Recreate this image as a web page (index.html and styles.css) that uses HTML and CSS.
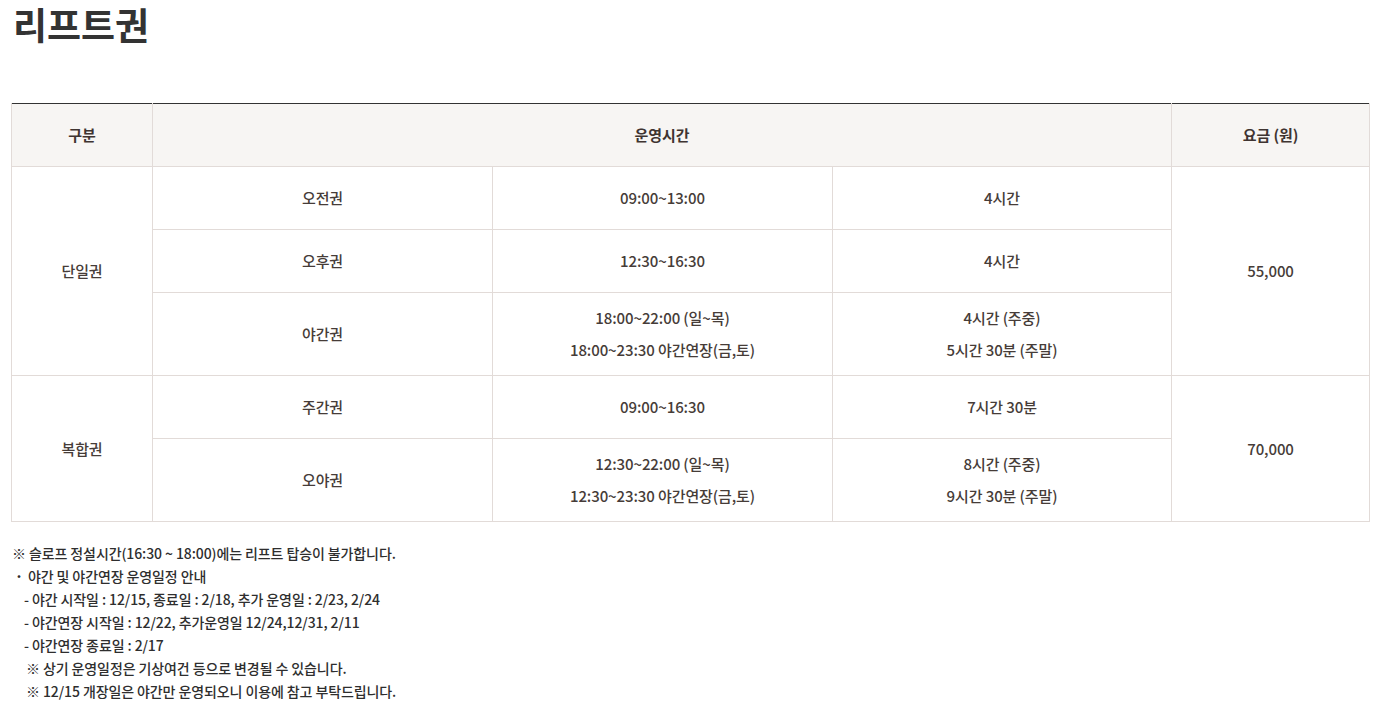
FILE: index.html
```html
<!DOCTYPE html>
<html lang="ko">
<head>
  <meta charset="UTF-8">
  <meta name="viewport" content="width=device-width, initial-scale=1.0">
  <title>리프트권</title>
  <link rel="stylesheet" href="styles.css">
</head>
<body>
  <h1 class="page-title">리프트권</h1>

  <!-- 리프트권 요금표 -->
  <table class="price-table">
    <colgroup>
      <col class="col-type">
      <col class="col-name">
      <col class="col-time">
      <col class="col-hours">
      <col class="col-price">
    </colgroup>
    <thead>
      <tr>
        <th>구분</th>
        <th colspan="3">운영시간</th>
        <th>요금 (원)</th>
      </tr>
    </thead>
    <tbody>
      <tr>
        <td rowspan="3">단일권</td>
        <td>오전권</td>
        <td>09:00~13:00</td>
        <td>4시간</td>
        <td rowspan="3">55,000</td>
      </tr>
      <tr>
        <td>오후권</td>
        <td>12:30~16:30</td>
        <td>4시간</td>
      </tr>
      <tr class="tall">
        <td>야간권</td>
        <td>18:00~22:00 (일~목)<br>18:00~23:30 야간연장(금,토)</td>
        <td>4시간 (주중)<br>5시간 30분 (주말)</td>
      </tr>
      <tr>
        <td rowspan="2">복합권</td>
        <td>주간권</td>
        <td>09:00~16:30</td>
        <td>7시간 30분</td>
        <td rowspan="2">70,000</td>
      </tr>
      <tr class="tall">
        <td>오야권</td>
        <td>12:30~22:00 (일~목)<br>12:30~23:30 야간연장(금,토)</td>
        <td>8시간 (주중)<br>9시간 30분 (주말)</td>
      </tr>
    </tbody>
  </table>

  <!-- 안내사항 -->
  <div class="notes">
    <p>※ 슬로프 정설시간(16:30 ~ 18:00)에는 리프트 탑승이 불가합니다.</p>
    <p class="bullet">야간 및 야간연장 운영일정 안내</p>
    <p class="sub">- 야간 시작일 : 12/15, 종료일 : 2/18, 추가 운영일 : 2/23, 2/24</p>
    <p class="sub">- 야간연장 시작일 : 12/22, 추가운영일 12/24,12/31, 2/11</p>
    <p class="sub">- 야간연장 종료일 : 2/17</p>
    <p class="sub-note">※ 상기 운영일정은 기상여건 등으로 변경될 수 있습니다.</p>
    <p class="sub-note">※ 12/15 개장일은 야간만 운영되오니 이용에 참고 부탁드립니다.</p>
  </div>
</body>
</html>
```

FILE: styles.css
```css
body {
  margin: 0;
  padding: 0 13px 0 11px;
  font-family: "Noto Sans CJK JP", "Noto Sans CJK KR", sans-serif;
  font-feature-settings: "locl" 0;
  color: #463c38;
  background: #ffffff;
}

.page-title {
  margin: 0 0 0 2px;
  font-size: 37px;
  line-height: 48px;
  font-weight: 700;
  color: #333333;
}

.price-table {
  width: 1358px;
  margin-top: 55px;
  border-collapse: collapse;
  border-top: 1px solid #333333;
  table-layout: fixed;
  font-size: 15px;
  letter-spacing: -0.1px;
}

.col-type { width: 141px; }
.col-name { width: 340px; }
.col-time { width: 340px; }
.col-hours { width: 339px; }
.col-price { width: 198px; }

.price-table th,
.price-table td {
  border: 1px solid #e2dbd8;
  text-align: center;
  vertical-align: middle;
  padding: 9px 10px;
  line-height: 32px;
}

.price-table thead th {
  border-top: none;
  background: #f7f5f3;
  font-weight: 700;
  color: #3f3431;
  height: 44px;
}

.price-table td {
  font-weight: 500;
  height: 44px;
}

.price-table tr.tall td {
  height: 64px;
}

.notes {
  margin-top: 20px;
  font-size: 14px;
  line-height: 23px;
  font-weight: 500;
  letter-spacing: -0.1px;
  color: #2e2e2e;
}

.notes p {
  margin: 0 0 0 1px;
}

.notes .bullet {
  margin-left: 2px;
}

.notes .bullet::before {
  content: "・";
  font-size: 12px;
  margin-right: 3px;
}

.notes .sub {
  margin-left: 13px;
}

.notes .sub-note {
  margin-left: 15px;
}
```
